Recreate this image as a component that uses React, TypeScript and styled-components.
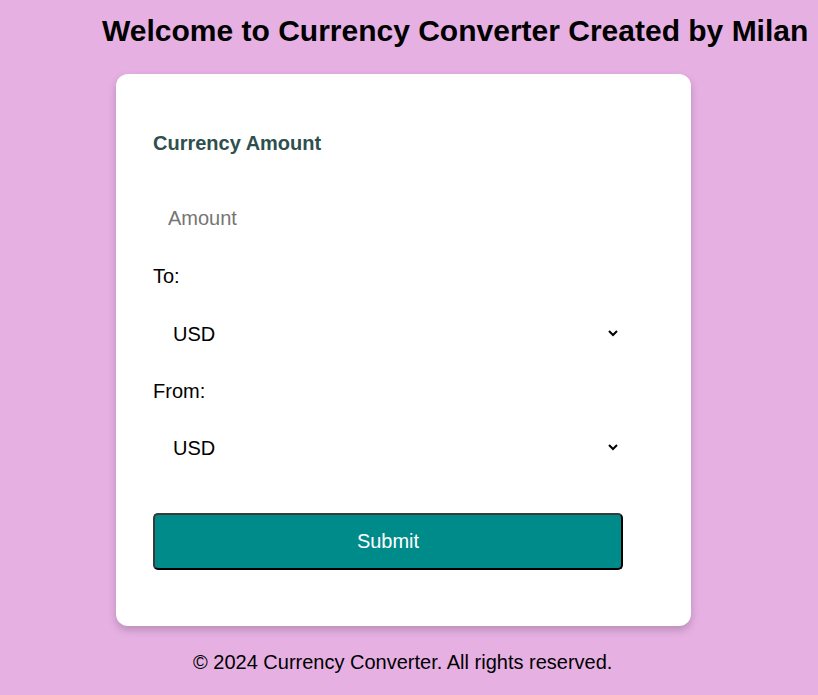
import styled, { createGlobalStyle } from "styled-components";

const GlobalStyle = createGlobalStyle`
  body {
    margin: 0;
    background-color: #e6b0e3;
    font-family: "Liberation Sans", Arial, sans-serif;
  }
`;

const Page = styled.div`
  display: flex;
  flex-direction: column;
  min-height: 695px;
`;

const Heading = styled.h1`
  margin: 14px 0 0 102px;
  font-size: 30px;
  line-height: 34px;
  font-weight: bold;
  color: #000;
  white-space: nowrap;
`;

const Card = styled.div`
  width: 575px;
  box-sizing: border-box;
  margin: 26px 0 0 116px;
  padding: 58px 37px 56px;
  background-color: #ffffff;
  border-radius: 12px;
  box-shadow: 0 4px 8px rgba(0, 0, 0, 0.2);
  display: flex;
  flex-direction: column;
`;

const Title = styled.label`
  font-size: 20px;
  line-height: 23px;
  font-weight: bold;
  color: #2f4f4f;
  margin-bottom: 36px;
`;

const Label = styled.label<{ $top?: number; $bottom?: number }>`
  font-size: 20px;
  line-height: 23px;
  color: #000;
  margin: ${(p) => p.$top ?? 19}px 0 ${(p) => p.$bottom ?? 19}px;
`;

const AmountInput = styled.input`
  width: 470px;
  box-sizing: border-box;
  height: 55px;
  padding: 0 15px;
  border: none;
  outline: none;
  font-family: inherit;
  font-size: 20px;
  color: #000;

  &::placeholder {
    color: #757575;
  }
`;

const Select = styled.select`
  width: 468px;
  box-sizing: border-box;
  height: 53px;
  padding: 0 15px 0 16px;
  border: none;
  outline: none;
  background-color: #fff;
  font-family: inherit;
  font-size: 20px;
  color: #000;
`;

const SubmitButton = styled.button`
  width: 470px;
  height: 57px;
  margin-top: 39px;
  box-sizing: border-box;
  background-color: #008b8b;
  color: #ffffff;
  font-family: inherit;
  font-size: 20px;
  border: 2px solid #3a3a3a;
  border-bottom-color: #000;
  border-right-color: #000;
  border-radius: 5px;
  cursor: pointer;
`;

const Footer = styled.footer`
  margin: 25px 0 0 193px;
  font-size: 20px;
  line-height: 23px;
  color: #000;
`;

const currencies = ["USD", "EUR", "GBP", "INR", "JPY"];

export default function App() {
  return (
    <Page>
      <GlobalStyle />
      <Heading>Welcome to Currency Converter Created by Milan</Heading>
      <Card>
        <Title>Currency Amount</Title>
        <AmountInput type="number" placeholder="Amount" />
        <Label>To:</Label>
        <Select defaultValue="USD">
          {currencies.map((c) => (
            <option key={c}>{c}</option>
          ))}
        </Select>
        <Label $top={20} $bottom={18}>
          From:
        </Label>
        <Select defaultValue="USD">
          {currencies.map((c) => (
            <option key={c}>{c}</option>
          ))}
        </Select>
        <SubmitButton>Submit</SubmitButton>
      </Card>
      <Footer>© 2024 Currency Converter. All rights reserved.</Footer>
    </Page>
  );
}
